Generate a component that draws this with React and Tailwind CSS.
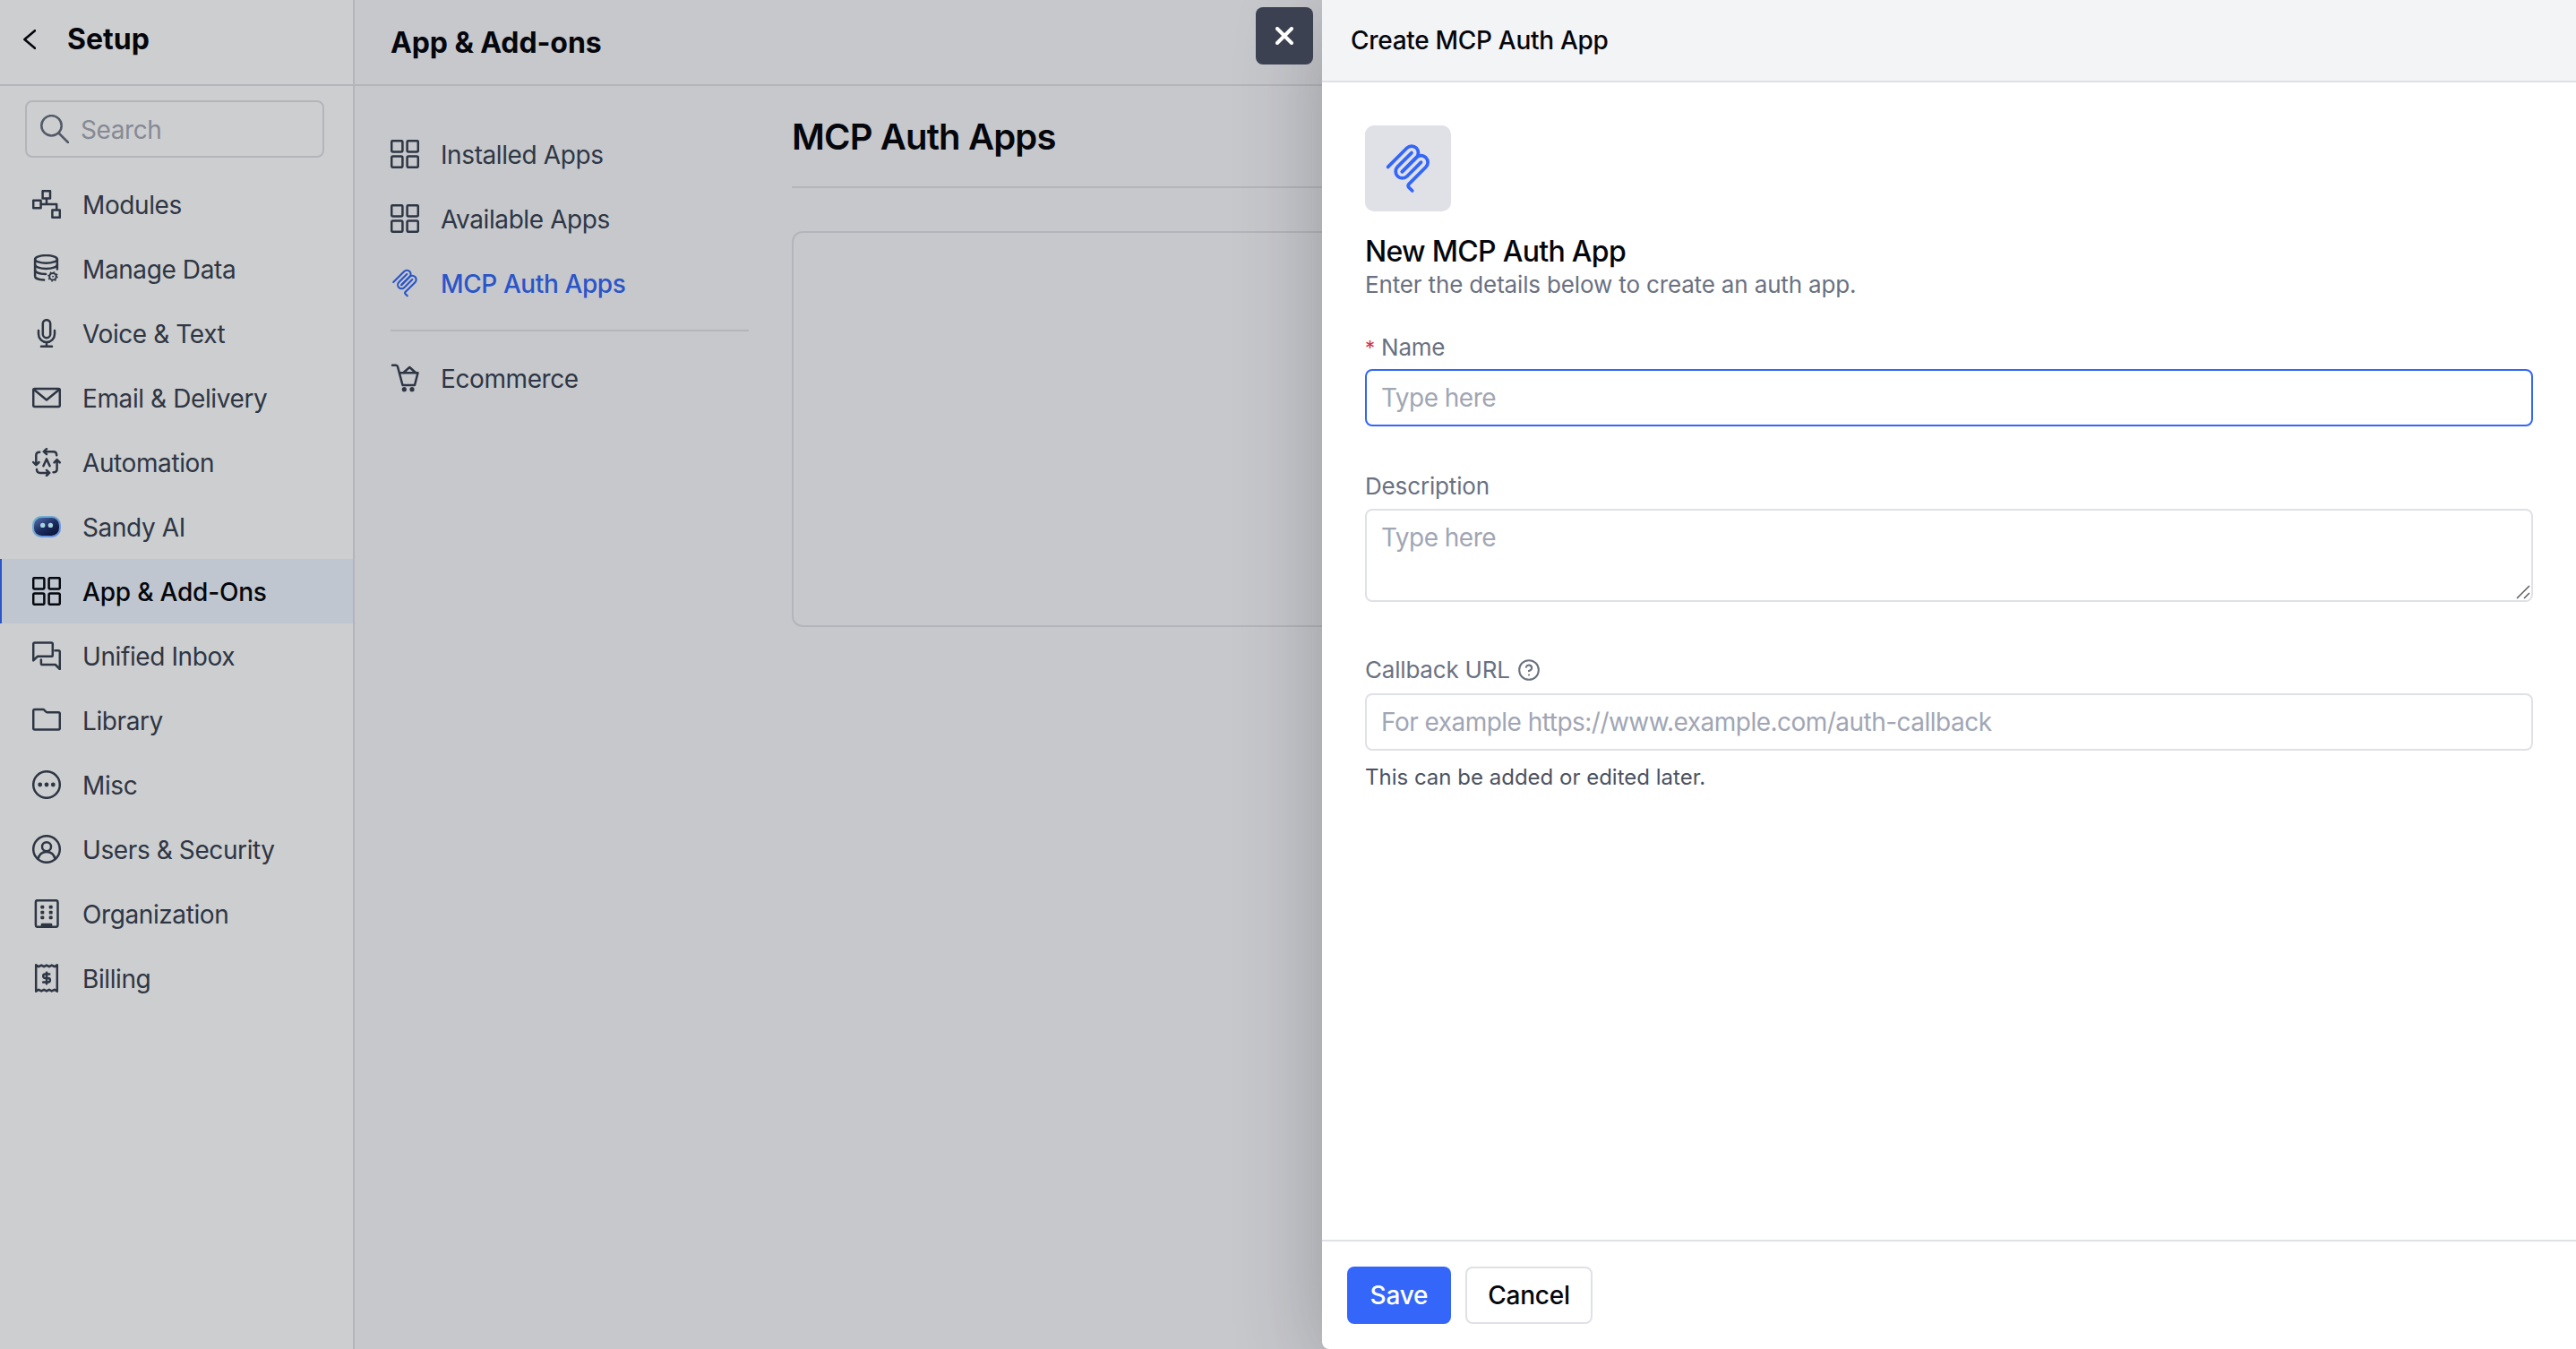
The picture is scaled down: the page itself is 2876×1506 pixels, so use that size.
import React, { useState } from "react";
import { CircleQuestionMark, DollarSign } from "lucide-react";

const Icon = ({ children, className = "size-8", viewBox = "0 0 32 32" }) => (
  <svg
    viewBox={viewBox}
    className={`shrink-0 ${className}`}
    fill="none"
    stroke="currentColor"
    strokeWidth="2.5"
    strokeLinecap="round"
    strokeLinejoin="round"
  >
    {children}
  </svg>
);

const ModulesIcon = () => (
  <Icon>
    <rect x="11.6" y="1.2" width="8.4" height="8.4" />
    <rect x="1.2" y="11.8" width="8.4" height="8.4" />
    <rect x="22.4" y="22.4" width="8.4" height="8.4" />
    <path d="M16 10v6M10 16h17.2v6" />
  </Icon>
);

const DataIcon = () => (
  <Icon>
    <ellipse cx="15.5" cy="5.4" rx="12.4" ry="4.3" />
    <path d="M3.1 5.4v19c0 2 4 3.8 10 4.2M27.9 5.4v11" />
    <path d="M3.1 11.4c0 2.6 5.6 4.6 12.4 4.6s12.4-2 12.4-4.6M3.1 17.6c0 2.4 5 4.2 12 4.3" />
    <circle cx="23" cy="24.7" r="3.8" strokeWidth="2" />
    <circle cx="23" cy="24.7" r="5" strokeWidth="1.6" strokeDasharray="1.5 2.43" strokeLinecap="butt" />
    <circle cx="23" cy="24.7" r="0.6" strokeWidth="1" />
  </Icon>
);

const MicIcon = () => (
  <Icon>
    <rect x="11.8" y="1.2" width="8.4" height="20" rx="4.2" />
    <path d="M7 13v4a9 9 0 0 0 18 0v-4M16 26v4.8M10 30.8h12" />
  </Icon>
);

const MailIcon = () => (
  <Icon>
    <rect x="1.2" y="6.1" width="29.6" height="19.9" rx="1.4" />
    <path d="m2 7 14 11.5L30 7" />
  </Icon>
);

const AutomationIcon = () => (
  <Icon>
    <path d="M27.2 8.2C27.2 5.5 26 4.2 23.5 4.2H13M16 1.2l-3.2 3L16 7.2" />
    <path d="M8.2 4.8C5.5 4.8 4.3 6 4.3 8.5V19M1.2 16l3.1 3.2L7.5 16" />
    <path d="M5 24c0 2.7 1.2 3.9 3.8 3.9H19M16 24.8l3.2 3.1L16 31" />
    <path d="M23.6 27.2c2.8 0 4-1.2 4-3.8V13.6M24.6 16.4l3-3.2 3.2 3.2" />
    <path d="M12.4 20.2 16 12.4l3.6 7.8" />
  </Icon>
);

const SandyIcon = () => (
  <svg viewBox="0 0 32 32" className="size-8 shrink-0">
    <defs>
      <linearGradient id="sandy-rim" x1="0" y1="0" x2="1" y2="1">
        <stop offset="0" stopColor="#6fb9cb" />
        <stop offset="1" stopColor="#6a8ae0" />
      </linearGradient>
      <linearGradient id="sandy-face" x1="0" y1="0" x2="0.8" y2="1">
        <stop offset="0" stopColor="#5470b0" />
        <stop offset="0.55" stopColor="#1c2c60" />
        <stop offset="1" stopColor="#0a1438" />
      </linearGradient>
    </defs>
    <rect y="4" width="32" height="24" rx="10" fill="url(#sandy-rim)" />
    <rect x="2" y="6" width="28" height="20" rx="8.5" fill="url(#sandy-face)" />
    <circle cx="11.7" cy="14.4" r="2.7" fill="#a9d3dc" />
    <circle cx="20.4" cy="14.4" r="2.7" fill="#a9d3dc" />
  </svg>
);

const GridIcon = () => (
  <Icon>
    <rect x="1.2" y="1.2" width="12.2" height="12.2" rx="1.4" />
    <rect x="18.6" y="1.2" width="12.2" height="12.2" rx="1.4" />
    <rect x="1.2" y="18.6" width="12.2" height="12.2" rx="1.4" />
    <rect x="18.6" y="18.6" width="12.2" height="12.2" rx="1.4" />
  </Icon>
);

const InboxIcon = () => (
  <Icon>
    <path d="M1.2 21.4V3c0-1 .6-1.6 1.6-1.6h18.4c1 0 1.6.6 1.6 1.6v12.2c0 1-.6 1.6-1.6 1.6H5.8z" />
    <path d="M25.4 10.2h3.8c1 0 1.6.6 1.6 1.6V31l-5-5H11.4c-1 0-1.500-.6-1.500-1.600v-4" />
  </Icon>
);

const FolderIcon = () => (
  <Icon>
    <path d="M1.2 5.6c0-1 .5-1.5 1.5-1.5h9.8c.8 0 3 3.1 4 3.1h12.8c1 0 1.5.5 1.5 1.5v16.4c0 1-.5 1.5-1.5 1.5H2.7c-1 0-1.5-.5-1.5-1.5z" />
  </Icon>
);

const MiscIcon = () => (
  <Icon>
    <circle cx="16" cy="16" r="14.8" />
    <g fill="currentColor" stroke="none">
      <circle cx="8.7" cy="16" r="2.4" />
      <circle cx="16" cy="16" r="2.4" />
      <circle cx="23.3" cy="16" r="2.4" />
    </g>
  </Icon>
);

const UserIcon = () => (
  <Icon>
    <circle cx="16" cy="16" r="14.8" />
    <circle cx="16" cy="13.2" r="5" />
    <path d="M6.4 27C7.6 22 11 18.9 16 18.9s8.4 3.1 9.6 8.1" />
  </Icon>
);

const BuildingIcon = () => (
  <Icon>
    <rect x="3.9" y="1.2" width="24.6" height="29.6" rx="2" />
    <g fill="currentColor" stroke="none">
      <rect x="9.3" y="6.8" width="4" height="3.8" rx="1" />
      <rect x="18.7" y="6.8" width="4" height="3.8" rx="1" />
      <rect x="9.3" y="12.7" width="4" height="3.8" rx="1" />
      <rect x="18.7" y="12.7" width="4" height="3.8" rx="1" />
      <rect x="9.3" y="18.5" width="4" height="3.8" rx="1" />
      <rect x="18.7" y="18.5" width="4" height="3.8" rx="1" />
      <rect x="9.7" y="26.8" width="12.6" height="4.5" rx="1" />
    </g>
  </Icon>
);

const BillingIcon = () => (
  <Icon>
    <path d="M4.2 1.2v29.6l3-2 3 1.6 2.9-1.6 2.9 1.6 2.9-1.6 2.9 1.6 3-1.6 3 2V1.200l-3 2-3-1.600-2.900 1.600L16 1.600l-2.900 1.600-2.900-1.600-3 1.600z" />
    <DollarSign x="8.3" y="8.3" width="15.5" height="15.5" strokeWidth="3.8" />
  </Icon>
);

const CartIcon = () => (
  <Icon>
    <path d="M2 1.800h4c1 0 1.700.5 2 1.600L13.500 24H27l3.500-13.800H10" />
    <path d="m14.5 10 6.8-6 6.7 6" />
    <g fill="currentColor" stroke="none">
      <circle cx="15.3" cy="28.7" r="2.6" />
      <circle cx="24" cy="28.7" r="2.6" />
    </g>
  </Icon>
);

const McpIcon = ({ className = "size-8" }) => (
  <svg
    viewBox="0 0 180 180"
    className={`shrink-0 ${className}`}
    fill="none"
    stroke="currentColor"
    strokeWidth="12"
    strokeLinecap="round"
  >
    <path d="M18 84.8528L85.8822 16.9706C95.2548 7.59798 110.451 7.59798 119.823 16.9706C129.196 26.3431 129.196 41.5391 119.823 50.9117L68.5581 102.177" />
    <path d="M69.2652 101.47L119.823 50.9117C129.196 41.5391 144.392 41.5391 153.765 50.9117L154.118 51.2652C163.491 60.6378 163.491 75.8338 154.118 85.2063L92.7248 146.6C89.6006 149.724 89.6006 154.789 92.7248 157.913L105.331 170.52" />
    <path d="M102.853 33.9411L52.6482 84.1457C43.2756 93.5183 43.2756 108.714 52.6482 118.087C62.0208 127.459 77.2167 127.459 86.5893 118.087L136.794 67.8822" />
  </svg>
);

const setupItems = [
  { label: "Modules", icon: ModulesIcon },
  { label: "Manage Data", icon: DataIcon },
  { label: "Voice & Text", icon: MicIcon },
  { label: "Email & Delivery", icon: MailIcon },
  { label: "Automation", icon: AutomationIcon },
  { label: "Sandy AI", icon: SandyIcon },
  { label: "App & Add-Ons", icon: GridIcon, active: true },
  { label: "Unified Inbox", icon: InboxIcon },
  { label: "Library", icon: FolderIcon },
  { label: "Misc", icon: MiscIcon },
  { label: "Users & Security", icon: UserIcon },
  { label: "Organization", icon: BuildingIcon },
  { label: "Billing", icon: BillingIcon },
];

const appItems = [
  { label: "Installed Apps", icon: GridIcon },
  { label: "Available Apps", icon: GridIcon },
  { label: "MCP Auth Apps", icon: McpIcon, active: true },
];

function Sidebar() {
  return (
    <aside className="flex w-[396px] shrink-0 flex-col border-r-2 border-[#b4b5ba] bg-[#cdced0]">
      <div className="flex h-24 items-center border-b-2 border-[#b4b5ba] pb-1.5 pl-[26px] text-[#05070d]">
        <Icon viewBox="0 0 14 22" className="h-[22px] w-3.5">
          <path d="M13 1.2 1.4 11 13 20.8" strokeWidth="2.6" />
        </Icon>
        <h1 className="ml-[35px] text-[32px] font-bold leading-10">Setup</h1>
      </div>

      <label className="ml-7 mr-8 mt-4 flex h-16 items-center rounded-lg border-2 border-[#b4b5ba] pl-[15px]">
        <Icon className="size-8 text-[#535a67]">
          <circle cx="12.5" cy="12.3" r="11.2" />
          <path d="M20.5 20.5 31 31" strokeWidth="2.6" />
        </Icon>
        <input
          placeholder="Search"
          className="ml-[13px] w-56 bg-transparent pt-0.5 text-[28px] tracking-[-0.4px] outline-none placeholder:text-[#858a94]"
        />
      </label>

      <nav className="mt-4">
        {setupItems.map(({ label, icon: ItemIcon, active }) => (
          <a
            key={label}
            className={`flex h-[72px] items-center gap-6 border-l-2 pl-[34px] text-[28px] ${
              active
                ? "border-[#2a55c8] bg-[#bfc6d0] font-medium tracking-[-0.2px] text-[#05070d]"
                : "border-transparent tracking-[-0.4px] text-[#2e3644]"
            }`}
          >
            <ItemIcon />
            <span className="pt-0.5">{label}</span>
          </a>
        ))}
      </nav>
    </aside>
  );
}

function AppsPage() {
  return (
    <main className="flex min-w-0 flex-1 flex-col bg-[#c7c8cc]">
      <header className="flex h-24 items-center border-b-2 border-[#b4b5ba] pl-10 pt-0.5">
        <h2 className="text-[32px] font-bold leading-10 tracking-[-0.1px] text-[#05070d]">
          App &amp; Add-ons
        </h2>
      </header>

      <div className="flex flex-1">
        <nav className="w-[488px] shrink-0 pl-10 pt-10 text-[28px] tracking-[-0.4px] text-[#2e3644]">
          {appItems.map(({ label, icon: ItemIcon, active }) => (
            <a
              key={label}
              className={`flex h-[72px] items-center gap-6 ${active ? "font-medium text-[#2a55c8]" : ""}`}
            >
              <ItemIcon />
              <span className="pt-0.5">{label}</span>
            </a>
          ))}
          <hr className="mb-4 mt-4 w-[400px] border-t-2 border-[#b4b5ba]" />
          <a className="flex h-[72px] items-center gap-6">
            <CartIcon />
            <span className="pt-0.5">Ecommerce</span>
          </a>
        </nav>

        <section className="flex-1">
          <div className="flex h-[114px] items-center border-b-2 border-[#b4b5ba] pt-0.5">
            <h3 className="text-[40px] font-semibold tracking-[-0.85px] text-[#05070d]">MCP Auth Apps</h3>
          </div>
          <div className="mt-12 h-[442px] rounded-xl border-2 border-[#b4b5ba]" />
        </section>
      </div>
    </main>
  );
}

function CreateDrawer() {
  const [form, setForm] = useState({ name: "", description: "", callback: "" });
  const update = (e) => setForm({ ...form, [e.target.name]: e.target.value });

  return (
    <div className="absolute inset-y-0 right-0 flex w-[1400px] flex-col rounded-bl-lg bg-white shadow-[0_16px_96px_rgba(40,42,50,0.3)]">
      {/* Close */}
      <button className="absolute -left-[74px] top-2 flex size-16 items-center justify-center rounded-lg bg-[#3b4150] text-white">
        <Icon viewBox="0 0 20 20" className="size-5">
          <path d="m2 2 16 16M18 2 2 18" strokeWidth="4" />
        </Icon>
      </button>

      <header className="flex h-[92px] items-center border-b-2 border-[#e0e1e7] bg-[#f3f4f6] pl-8">
        <h2 className="text-[28px] font-medium tracking-[-0.3px] text-[#05070d]">Create MCP Auth App</h2>
      </header>

      <form className="flex flex-1 flex-col px-12 pt-12" onSubmit={(e) => e.preventDefault()}>
        <div className="flex size-24 items-center justify-center rounded-[10px] bg-[#e0e1e7] text-[#3366f9]">
          <McpIcon className="size-14" />
        </div>
        <h3 className="mt-[25px] text-[32px] font-medium leading-10 tracking-[-0.7px] text-[#05070d]">
          New MCP Auth App
        </h3>
        <p className="-mt-px text-[26px] leading-9 tracking-[-0.15px] text-[#6a7181]">
          Enter the details below to create an auth app.
        </p>

        {/* Name */}
        <label
          htmlFor="name"
          className="mt-[34px] flex gap-[7px] text-[26px] leading-9 tracking-[-0.2px] text-[#6a7181]"
        >
          <span className="w-[11px] text-[22px] text-[#d3324a]">*</span>
          Name
        </label>
        <input
          id="name"
          name="name"
          value={form.name}
          onChange={update}
          placeholder="Type here"
          className="mt-1.5 h-16 rounded-lg border-2 border-[#3366f9] px-4 text-[28px] tracking-[-0.52px] outline-none placeholder:text-[#a1a6b4]"
        />

        {/* Description */}
        <label
          htmlFor="description"
          className="mt-[49px] text-[26px] leading-9 tracking-[-0.15px] text-[#6a7181]"
        >
          Description
        </label>
        <div className="relative mt-[7px] flex">
          <textarea
            id="description"
            name="description"
            value={form.description}
            onChange={update}
            placeholder="Type here"
            className="h-[104px] w-full resize-none rounded-lg border-2 border-[#e0e1e7] px-4 py-2.5 text-[28px] leading-10 tracking-[-0.52px] outline-none placeholder:text-[#a1a6b4]"
          />
          <svg
            viewBox="0 0 16 16"
            className="absolute bottom-[3px] right-[3px] size-4"
            stroke="#5c5c5c"
            strokeWidth="1.5"
          >
            <path d="M1 15 15 1M9 15l6-6" />
          </svg>
        </div>

        {/* Callback URL */}
        <label
          htmlFor="callback"
          className="mt-[58px] flex items-center gap-2 text-[26px] leading-9 tracking-[-0.2px] text-[#6a7181]"
        >
          Callback URL
          <CircleQuestionMark className="size-[26px]" strokeWidth={1.9} />
        </label>
        <input
          id="callback"
          name="callback"
          value={form.callback}
          onChange={update}
          placeholder="For example https://www.example.com/auth-callback"
          className="mt-2 h-16 rounded-lg border-2 border-[#e0e1e7] px-4 text-[28px] tracking-[-0.52px] outline-none placeholder:text-[#a1a6b4]"
        />
        <p className="mt-3 text-2xl leading-9 text-[#4b5261]">This can be added or edited later.</p>
      </form>

      <footer className="flex h-[122px] gap-4 border-t-2 border-[#e0e1e7] px-7 pt-7 text-[28px] font-medium tracking-[-0.2px]">
        <button className="h-16 w-[116px] rounded-lg bg-[#3366f9] text-white">Save</button>
        <button className="h-16 w-[142px] rounded-lg border-2 border-[#e0e1e7] text-[#05070d]">Cancel</button>
      </footer>
    </div>
  );
}

export default function App() {
  return (
    <div className="relative flex h-[1506px] w-[2876px] overflow-hidden font-[Inter,sans-serif]">
      <Sidebar />
      <AppsPage />
      <CreateDrawer />
    </div>
  );
}
